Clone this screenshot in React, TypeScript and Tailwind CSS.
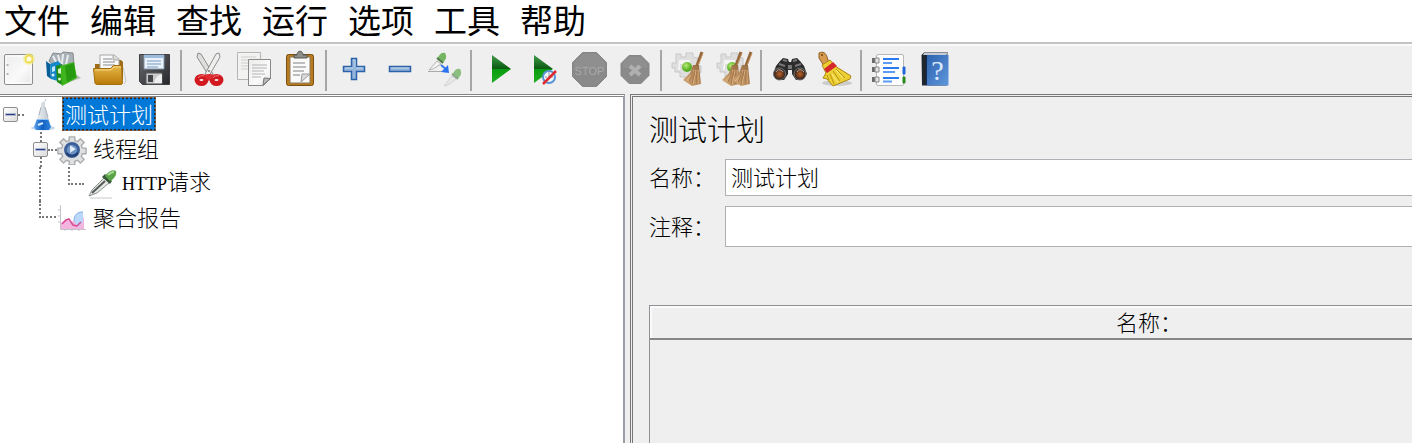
import type { ReactNode } from 'react';

const menus = ['文件', '编辑', '查找', '运行', '选项', '工具', '帮助'];

function Svg({ children }: { children: ReactNode }) {
  return (
    <svg width="36" height="36" viewBox="0 0 36 36" fill="none" className="shrink-0 overflow-visible">
      {children}
    </svg>
  );
}

function Gradients() {
  return (
    <svg width="0" height="0" className="absolute">
      <defs>
        <linearGradient id="paper" x1="0" y1="0" x2="1" y2="1">
          <stop offset="0" stopColor="#ececec" />
          <stop offset="0.6" stopColor="#fafafa" />
          <stop offset="1" stopColor="#e4e4e4" />
        </linearGradient>
        <linearGradient id="gold" x1="0" y1="0" x2="0" y2="1">
          <stop offset="0" stopColor="#e8b84a" />
          <stop offset="1" stopColor="#b87a08" />
        </linearGradient>
        <linearGradient id="dark" x1="0" y1="0" x2="1" y2="1">
          <stop offset="0" stopColor="#6a6c70" />
          <stop offset="1" stopColor="#26272b" />
        </linearGradient>
        <linearGradient id="play" x1="0" y1="0" x2="0" y2="1">
          <stop offset="0" stopColor="#3f9c4a" />
          <stop offset="0.48" stopColor="#0c5a12" />
          <stop offset="0.52" stopColor="#0a9c10" />
          <stop offset="1" stopColor="#1fae22" />
        </linearGradient>
        <linearGradient id="straw" x1="1" y1="0" x2="0" y2="1">
          <stop offset="0" stopColor="#94683f" />
          <stop offset="1" stopColor="#d8ad78" />
        </linearGradient>
        <linearGradient id="book" x1="0" y1="0" x2="1" y2="1">
          <stop offset="0" stopColor="#2d62ae" />
          <stop offset="1" stopColor="#5f98dd" />
        </linearGradient>
        <linearGradient id="flask" x1="0" y1="0" x2="1" y2="0">
          <stop offset="0" stopColor="#5aa0ea" />
          <stop offset="0.5" stopColor="#0f5fc2" />
          <stop offset="1" stopColor="#3488dd" />
        </linearGradient>
        <linearGradient id="glass" x1="0" y1="0" x2="1" y2="0">
          <stop offset="0" stopColor="#f4f6f8" />
          <stop offset="0.6" stopColor="#d3d9df" />
          <stop offset="1" stopColor="#b4bcc5" />
        </linearGradient>
        <radialGradient id="lens">
          <stop offset="0" stopColor="#b8622a" />
          <stop offset="0.6" stopColor="#6b3a1c" />
          <stop offset="1" stopColor="#1c1c1c" />
        </radialGradient>
        <radialGradient id="ball" cx="0.4" cy="0.35">
          <stop offset="0" stopColor="#b6ee78" />
          <stop offset="1" stopColor="#58ad20" />
        </radialGradient>
      </defs>
    </svg>
  );
}

const gearPath =
  'M13 2h6v4l3 1 3-3 4 4-3 3 1 3h4v6h-4l-1 3 3 3-4 4-3-3-3 1v4h-6v-4l-3-1-3 3-4-4 3-3-1-3H1v-6h4l1-3-3-3 4-4 3 3 3-1z';

function Pipette() {
  return (
    <>
      <path d="M2 27 5 21 17 9l5 5L10 24z" fill="#e6e8e6" stroke="#8c908c" />
      <path d="M5 24 18 12" stroke="#555c58" strokeWidth="2" />
      <path d="m15 8 8 7 2-3-7-7z" fill="#37563a" />
      <path d="M18 7c3-4 7-7 11-5 1 4-2 8-6 10z" fill="#5aa447" />
      <path d="M21 6c2-2 4-3 6-3" stroke="#a8d894" strokeWidth="2" />
      <path d="M3 29h22" stroke="#c9c9c9" />
    </>
  );
}

function Broom({ x = 0 }: { x?: number }) {
  return (
    <g transform={`translate(${x} 0)`}>
      <path d="m31 0-6 16" stroke="#94663c" strokeWidth="3" />
      <path d="m32 1-6 15" stroke="#c79662" />
      <path d="M22 13h6l2 19-9 2-9-6 7-7z" fill="url(#straw)" />
      <path d="m23 18-6 12m8-12-3 14m5-14v14M21 22l-6 7" stroke="#e2b98a" />
      <path d="m22 19-4 11m6-11-3 13m5-13v13" stroke="#a8794a" />
    </g>
  );
}

function PaleGear() {
  return (
    <>
      <path d="M5 2h5v3h5V1h7v4l5 1v7l3 1v7h-5v4h-5v4h-6v-4h-5v-5H4v-4H1v-5h4z" fill="#dedede" stroke="#c8c8c8" />
      <path d="M8 8h11v4H9v6H7z" fill="#f4f4f4" />
      <circle cx="16" cy="15" r="5" fill="url(#ball)" />
    </>
  );
}

const NewIcon = () => (
  <Svg>
    <rect x="3.5" y="2.5" width="28" height="30" rx="1.5" fill="url(#paper)" stroke="#8b8d88" />
    <rect x="5" y="4" width="25" height="27" stroke="#fff" />
    <path d="M6.500 12v2m0 7v2" stroke="#b5b5b5" strokeWidth="2" />
    <circle cx="28" cy="7" r="6" fill="#f6ee8a" opacity="0.6" />
    <circle cx="28" cy="7" r="3.500" fill="#fffce0" stroke="#ecdc58" strokeWidth="2" />
  </Svg>
);

const TemplatesIcon = () => (
  <Svg>
    <path d="M18 32 35 26l-4-3-12 4z" fill="#999" opacity="0.6" />
    <path d="m3 9 4-8 8 1 2-2 10 1 1 11-18 5z" fill="#aab1b6" stroke="#838b90" />
    <path d="m7 4 4 8M12 3l2 8M17 2l-1 10m6-9-2 10" stroke="#e9edef" strokeWidth="2" />
    <path d="m0 9 4 3 1 15-4-3z" fill="#075f99" />
    <path d="m4 12 8-3 3 3v18l-10-3z" fill="#1687c9" />
    <path d="m6 15 3-1v5l-3 1z" fill="#bfe6fa" />
    <circle cx="7" cy="23" r="1.500" fill="#d9f2ff" />
    <path d="m10 14 6-2v21l-5-3z" fill="#1c8a17" />
    <path d="m14 14 14-4 3 16-15 8z" fill="#3fb51d" />
    <path d="m19 14 9-3 2 14-9 5z" fill="#289a12" />
    <path d="m12 17 3-1v6l-3-1z" fill="#d6f5c5" />
    <circle cx="13.500" cy="27" r="1.500" fill="#d6f5c5" />
  </Svg>
);

const OpenIcon = () => (
  <Svg>
    <path d="M4 16V12h6V8h20l2 2v18H5z" fill="#9c6c15" />
    <path d="M9 18V3h14l5 4v12z" fill="#fafafa" stroke="#a6a6a6" />
    <path d="M12 7h9m-9 3h12m-12 3h12" stroke="#aeb0b4" strokeWidth="1.500" />
    <path d="M22 3v5h6" fill="#dcdcdc" stroke="#a6a6a6" />
    <path d="M2.500 16.500h17l3-3h8l1 18-1 1H6l-2-1z" fill="url(#gold)" stroke="#a4700c" />
    <path d="M4 18h16l3-3h7" stroke="#f6d687" />
    <path d="m32 15 3 14-2 3" stroke="#aaa" opacity="0.6" />
  </Svg>
);

const SaveIcon = () => (
  <Svg>
    <path d="M3.500 2.500h30v30h-27l-3-3z" fill="url(#dark)" stroke="#3c3e42" />
    <path d="M8 3h20v14H8z" fill="#e9f1fa" stroke="#7f93a8" />
    <path d="M8 3h20v3H8z" fill="#9dbbdc" />
    <path d="M11 9h14m-14 3h14m-14 3h11" stroke="#9fb8d4" strokeWidth="1.500" />
    <path d="M10 21h16v11H10z" fill="#c9cac9" stroke="#57595c" />
    <path d="M12 23h5v7h-5z" fill="#434549" />
    <path d="M18 31c1-5 4-8 8-9v9z" fill="#efefef" />
  </Svg>
);

const CutIcon = () => (
  <Svg>
    <path d="m7 1 3 1 12 20-4 2L6 5z" fill="#dededd" stroke="#8c8e8b" />
    <path d="m28 1-3 1-11 20 4 2L29 5z" fill="#efefee" stroke="#8c8e8b" />
    <circle cx="18" cy="19" r="1" fill="#777" />
    <ellipse cx="10.500" cy="28" rx="4.500" ry="3.500" stroke="#d31920" strokeWidth="5" />
    <ellipse cx="25.500" cy="28" rx="4.500" ry="3.500" stroke="#d31920" strokeWidth="5" />
    <path d="m12 23 6-1 6 1-6 6z" fill="#df2c30" />
    <path d="M7 26c1-2 4-3 6-2m9 2c1-2 4-3 6-2" stroke="#f27779" />
  </Svg>
);

const CopyIcon = () => (
  <Svg>
    <path d="M1.500.5h23v27h-23z" fill="#f2f2f1" stroke="#b4b6b3" />
    <path d="M5 5h15M5 8h15M5 11h8m-8 3h7m-7 3h7" stroke="#cfcfcf" />
    <path d="M12.500 7.500h22v19l-7 7h-15z" fill="url(#paper)" stroke="#888a85" />
    <path d="M16 13h15m-15 3h15m-15 3h12m-12 3h13m-13 3h9" stroke="#b2b2b2" />
    <path d="m27 33 1-7 6.500.5z" fill="#b9bab7" stroke="#777" />
  </Svg>
);

const PasteIcon = () => (
  <Svg>
    <rect x="5.500" y="2.500" width="27" height="31" rx="2" fill="#b87a20" stroke="#79500f" />
    <path d="M9 5h20v26H9z" fill="#fafafa" stroke="#8b7a5a" />
    <path d="M13 6V3h3c0-5 6-5 6 0h4v3z" fill="#8b8e8a" stroke="#565855" />
    <path d="M12 11h12m-12 4h13m-13 4h11m-11 4h7" stroke="#a9a9a9" strokeWidth="1.500" />
    <path d="m20 30 1-8 8 0z" fill="#dadada" stroke="#9a9a9a" />
  </Svg>
);

const PlusIcon = () => (
  <Svg>
    <path d="M15.500 6.500h5v8h8v5h-8v8h-5v-8h-8v-5h8z" fill="#94b6dc" stroke="#2c62a8" strokeWidth="1.500" />
    <path d="M17 8h2v7m-10 1h8m3 0h7" stroke="#bfd5ec" />
  </Svg>
);

const MinusIcon = () => (
  <Svg>
    <path d="M8.500 14.500h21v5h-21z" fill="#8fb2da" stroke="#2c62a8" strokeWidth="1.500" />
    <path d="M10 16h18" stroke="#bfd5ec" />
  </Svg>
);

const ToggleIcon = () => (
  <Svg>
    <path d="m3 18 8-9 4 3-8 5z" fill="#f4f4f4" stroke="#b2b4b2" />
    <path d="m11 6 6 5 2-3c2-2 1-6 0-7-3-1-5 1-6 3z" fill="#74b562" />
    <path d="m11 6 6 5" stroke="#52784c" strokeWidth="2" />
    <path d="M2 19.500h16" stroke="#aaa" />
    <path d="m15 13 6 5" stroke="#3277e8" strokeWidth="2" />
    <path d="m22 13 1 8-8-1z" fill="#2c74ef" />
    <g opacity="0.7">
      <path d="m18 34 8-10 4 3-8 6z" fill="#e4e6e4" stroke="#c6c8c6" />
      <path d="m26 22 6 5 2-3c2-2 1-6 0-7-3-1-5 1-6 3z" fill="#62ab50" />
      <path d="m26 22 6 5" stroke="#66885f" strokeWidth="2" />
    </g>
  </Svg>
);

const PlayIcon = () => (
  <Svg>
    <path d="M11 3v28l19-14z" fill="url(#play)" />
  </Svg>
);

const PlayNoPauseIcon = () => (
  <Svg>
    <path d="M8 3v28l19-14z" fill="url(#play)" />
    <circle cx="23" cy="25" r="6" fill="#f3f7fc" stroke="#5b94d6" strokeWidth="2" />
    <path d="M23 20v5h4M19 25h2" stroke="#8a98a8" />
    <path d="M17 32 30 19" stroke="#dd2a2e" strokeWidth="2.500" />
  </Svg>
);

const StopIcon = () => (
  <Svg>
    <path d="M11.500.5h14l10 10v14l-10 10h-14l-10-10v-14z" fill="#8a8a8a" stroke="#868686" />
    <path d="M12 2h13l9 9v6H3v-6z" fill="#8f8f8f" />
    <text x="18.500" y="23" textAnchor="middle" fill="#a8a8a8" className="font-['Liberation_Sans'] text-[11px]">
      STOP
    </text>
  </Svg>
);

const ShutdownIcon = () => (
  <Svg>
    <path d="M13 3.500h12l8 8v12l-8 8H13l-8-8v-12z" fill="#8a8a8a" stroke="#868686" />
    <path d="M14 5h10l7 7v4H7v-4z" fill="#8f8f8f" />
    <path d="m14 14 10 9m0-9-10 9" stroke="#b0b0b0" strokeWidth="4" />
  </Svg>
);

const ClearIcon = () => (
  <Svg>
    <PaleGear />
    <Broom />
  </Svg>
);

const ClearAllIcon = () => (
  <Svg>
    <PaleGear />
    <Broom x={-6} />
    <Broom x={4} />
  </Svg>
);

const SearchIcon = () => (
  <Svg>
    <path d="m5 14 4-5 3-3 5 1 1 3h2l1-3 5-1 3 3 4 5 3 8-5 6h-6l-4-6v-4h-4v4l-4 6H7l-5-6z" fill="#2c2c2c" />
    <path d="m12 8 4 1m6 0 4-1M8 12l6 2m16-2-6 2" stroke="#777" strokeWidth="2" />
    <path d="M17 13h4v4h-4z" fill="#777" />
    <ellipse cx="8.500" cy="22" rx="6" ry="6" fill="url(#lens)" stroke="#777" />
    <ellipse cx="29" cy="22" rx="6" ry="6" fill="url(#lens)" stroke="#777" />
    <path d="M5 20c1-3 5-3 7 0m14 0c1-3 5-3 7 0" stroke="#aaa" />
  </Svg>
);

const BroomIcon = () => (
  <Svg>
    <ellipse cx="21" cy="31" rx="15" ry="3" fill="#999" opacity="0.4" />
    <path d="M3 1c4-2 7 0 8 4l2 6-5 3L3 6z" fill="#d79b50" stroke="#8c6027" />
    <circle cx="6" cy="3" r="1" fill="#6b451d" />
    <path d="m6 13 8-5 5 6 16 10-1 3-17 7-6-7-4-1 3-5z" fill="#eccf32" stroke="#ad8710" />
    <path d="m8 17 9-7 4 4-10 7z" fill="#d5272c" />
    <path d="m14 22 4 10m-1-13 7 10m-4-12 9 9m-18-3 2 5" stroke="#b99315" />
    <path d="m16 22 6 9m-2-13 7 8" stroke="#fbf08c" />
  </Svg>
);

const FunctionIcon = () => (
  <Svg>
    <rect x="5.500" y="2.500" width="27" height="31" rx="1.500" fill="#fdfdfd" stroke="#b7b7b7" />
    <path d="M32 15h2v7h-2z" fill="#2569d8" stroke="#2569d8" />
    <path d="M32 25h2v6h-2z" fill="#288a1c" stroke="#288a1c" />
    {[6, 15, 25].map((y) => (
      <g key={y}>
        <path d={`M1 ${y}h5v5H1z`} fill="#6a6a6a" />
        <path d={`M4 ${y}h4v5H4z`} fill="#e3e3e3" stroke="#888" />
      </g>
    ))}
    <path d="M12 7h16M12 16h16M12 26h16" stroke="#2a7bf0" strokeWidth="2" />
    <path d="M12 11h9M12 20h12M12 29.500h9" stroke="#5a9cf6" strokeWidth="2" />
  </Svg>
);

const HelpIcon = () => (
  <Svg>
    <path d="M5.500 3 8 .5h24l-1 3v30H6z" fill="#20262e" />
    <path d="M8 1h24l-2 2H7z" fill="#c4cdd6" />
    <path d="M11 3h21.500v30.500H11z" fill="url(#book)" />
    <path d="M10.500 4v29" stroke="#122b52" />
    <text x="21.500" y="28" textAnchor="middle" fill="#dce9fa" className="font-['Liberation_Serif'] text-[28px]">
      ?
    </text>
  </Svg>
);

const FlaskIcon = () => (
  <svg width="24" height="34" viewBox="0 0 24 34" fill="none" className="shrink-0">
    <ellipse cx="12" cy="30" rx="12" ry="2.500" fill="#9dbbe0" opacity="0.6" />
    <path d="M10 9V5l4-2v6l6 20-2 2H5l-2-2z" fill="url(#glass)" />
    <path d="M10 9 8 17M14 9l3 10" stroke="#aab2bb" />
    <path d="M6 21h11l3 8-2 3H5l-2-3z" fill="url(#flask)" />
    <path d="M6 21.500h11" stroke="#8dc0f3" />
    <path d="m7 27 5-2" stroke="#d2e7fc" strokeWidth="2" />
    <path d="m14 3 1-2" stroke="#b9c2cc" />
  </svg>
);

const GearIcon = () => (
  <svg width="30" height="30" viewBox="0 0 32 32" fill="none" className="shrink-0">
    <path d={gearPath} fill="#dfe0e1" stroke="#a9abad" strokeLinejoin="round" strokeWidth="1.500" />
    <circle cx="16" cy="16" r="7" fill="#6c92c6" stroke="#3c5f98" strokeWidth="3" />
    <path d="M14 11v8l6-4z" fill="#e6eef8" />
    <path d="M10 19c3 4 9 4 12 0" stroke="#1f3f73" strokeWidth="2" />
  </svg>
);

const PipetteIcon = () => (
  <svg width="31" height="31" viewBox="0 0 31 31" fill="none" className="shrink-0">
    <Pipette />
  </svg>
);

const ChartIcon = () => (
  <svg width="29" height="28" viewBox="0 0 29 28" fill="none" className="shrink-0">
    <path d="M3 25v-6l5-4 5 3 5-2 4-5 4 3v11z" fill="#f3b4df" />
    <path d="M16 17c0-6 3-9 9-9v10l-5 5z" fill="#b9d8fa" />
    <path d="M16 17c0-6 3-9 9-9" stroke="#82abdf" />
    <path d="m4 20 4-4 3-1 4 6 4 1 4-4" stroke="#d84a94" strokeWidth="1.500" />
    <path d="M2.500 1v24.500H28M0 6h3M0 12h3M0 18h3m4 7v2m7-2v2m7-2v2" stroke="#c2c2c8" />
  </svg>
);

const toolGroups = [
  [
    { label: '新建', icon: <NewIcon /> },
    { label: '模板', icon: <TemplatesIcon /> },
    { label: '打开', icon: <OpenIcon /> },
    { label: '保存', icon: <SaveIcon /> },
  ],
  [
    { label: '剪切', icon: <CutIcon /> },
    { label: '复制', icon: <CopyIcon /> },
    { label: '粘贴', icon: <PasteIcon /> },
  ],
  [
    { label: '展开', icon: <PlusIcon /> },
    { label: '折叠', icon: <MinusIcon /> },
    { label: '切换', icon: <ToggleIcon /> },
  ],
  [
    { label: '启动', icon: <PlayIcon /> },
    { label: '不停顿开始', icon: <PlayNoPauseIcon /> },
    { label: '停止', icon: <StopIcon />, disabled: true },
    { label: '关闭', icon: <ShutdownIcon />, disabled: true },
  ],
  [
    { label: '清除', icon: <ClearIcon /> },
    { label: '清除全部', icon: <ClearAllIcon /> },
  ],
  [
    { label: '搜索', icon: <SearchIcon /> },
    { label: '重置搜索', icon: <BroomIcon /> },
  ],
  [
    { label: '函数助手', icon: <FunctionIcon /> },
    { label: '帮助', icon: <HelpIcon /> },
  ],
];

function Expander() {
  return (
    <button
      aria-label="折叠节点"
      className="flex size-[15px] shrink-0 items-center justify-center rounded-[2px] border border-[#8f8f8f] bg-gradient-to-br from-white to-[#dcdcdc]"
    >
      <span className="h-px w-[9px] bg-[#27408b] outline outline-[#27408b]/30" />
    </button>
  );
}

function Tree() {
  return (
    <ul className="text-[22px] leading-[30px]">
      <li>
        <div className="flex h-[35px] items-center pl-[3px]">
          <Expander />
          <span className="w-[6px] border-t-2 border-dotted border-[#777]" />
          <span className="ml-[7px] flex">
            <FlaskIcon />
          </span>
          <button className="ml-[7px] h-[34px] self-start border-2 border-dotted border-[#20262e] bg-[#0078d7] px-px pb-[2px] leading-[28px] text-white outline-1 -outline-offset-1 outline-[#d9782d]/50">
            测试计划
          </button>
        </div>
        <ul>
          <li>
            <div className="flex h-[35px] items-center pl-[33px]">
              <span className="flex h-full flex-col items-center">
                <span className="flex-1 border-l-2 border-dotted border-[#777]" />
                <Expander />
                <span className="flex-1 border-l-2 border-dotted border-[#777]" />
              </span>
              <span className="w-[9px] border-t-2 border-dotted border-[#777]" />
              <GearIcon />
              <button className="ml-[6px] pb-[5px]">线程组</button>
            </div>
            <ul>
              <li className="flex h-[34px] items-center pl-[39px]">
                <span className="h-full w-[29px] border-l-2 border-dotted border-[#777]" />
                <span className="h-[18px] w-[16px] self-start border-b-2 border-l-2 border-dotted border-[#777]" />
                <span className="ml-[3px] flex">
                  <PipetteIcon />
                </span>
                <button className="ml-[4px] pb-[5px]">
                  <span className="font-['Liberation_Serif'] text-[18px] font-normal">HTTP</span>
                  请求
                </button>
              </li>
            </ul>
          </li>
          <li className="flex h-[34px] items-center pl-[39px]">
            <span className="h-[17px] w-[17px] self-start border-b-2 border-l-2 border-dotted border-[#777]" />
            <span className="ml-[2px] flex">
              <ChartIcon />
            </span>
            <button className="ml-[6px] pb-[5px]">聚合报告</button>
          </li>
        </ul>
      </li>
    </ul>
  );
}

export default function App() {
  return (
    <div className="flex min-h-screen flex-col bg-[#efefef] font-['Noto_Sans_CJK_SC',sans-serif] text-black">
      <Gradients />
      <nav className="flex h-[42px] items-start gap-5 bg-white pl-1 text-[33px] leading-[38px]">
        {menus.map((menu) => (
          <button key={menu}>{menu}</button>
        ))}
      </nav>

      <div className="flex h-[52px] items-center border-t-2 border-[#c4c4c4] pt-[2px] pl-px shadow-[inset_0_2px_0_#fafafa]">
        {toolGroups.map((group, i) => (
          <div key={group[0].label} className="flex items-center">
            {i > 0 && <span className="mr-[9px] ml-2 h-[41px] w-[2px] bg-[#a6a6a6]" />}
            <div className="flex gap-[9px]">
              {group.map(({ label, icon, disabled }: { label: string; icon: ReactNode; disabled?: boolean }) => (
                <button key={label} aria-label={label} disabled={disabled}>
                  {icon}
                </button>
              ))}
            </div>
          </div>
        ))}
      </div>

      <div className="flex flex-1 gap-[5px] font-light">
        <aside className="w-[625px] shrink-0 border-t-[3px] border-r-2 border-double border-t-[#858585] border-r-[#9a9ea6] bg-white">
          <Tree />
        </aside>

        <main className="flex min-w-0 flex-1 flex-col overflow-hidden border-t-[3px] border-l-[3px] border-double border-[#777] pl-4">
          <h1 className="mt-[10px] text-[29px] leading-[42px] font-light">测试计划</h1>
          <div className="mt-[10px] flex items-center text-[22px]">
            <label htmlFor="name" className="w-[76px] shrink-0 pb-[3px]">
              名称：
            </label>
            <input
              id="name"
              defaultValue="测试计划"
              className="h-[37px] min-w-0 flex-1 border border-r-0 border-[#adb0b5] bg-white px-[5px] pb-[3px] outline-none"
            />
          </div>
          <div className="mt-[10px] flex items-center text-[22px]">
            <label htmlFor="comment" className="w-[76px] shrink-0 pb-[3px]">
              注释：
            </label>
            <input
              id="comment"
              className="h-[41px] min-w-0 flex-1 border border-r-0 border-[#adb0b5] bg-white px-[5px] pb-[3px] outline-none"
            />
          </div>
          <div className="mt-[58px] flex-1 border-t border-l border-[#8e9196]">
            <table className="w-[131%]">
              <thead>
                <tr>
                  <th className="h-[33px] border-b-2 border-[#868686] pb-[3px] text-[22px] leading-[28px] font-light shadow-[inset_2px_2px_0_#fafafa]">
                    名称：
                  </th>
                </tr>
              </thead>
            </table>
          </div>
        </main>
      </div>
    </div>
  );
}
